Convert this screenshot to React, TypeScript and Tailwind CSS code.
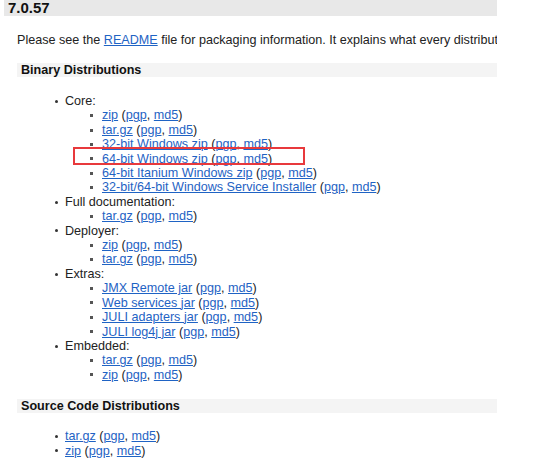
const link = "text-[#1f63c4] underline decoration-1 underline-offset-[1px]";

type Sub = { name: string };

const groups: { title: string; items: string[] }[] = [
  {
    title: "Core:",
    items: [
      "zip",
      "tar.gz",
      "32-bit Windows zip",
      "64-bit Windows zip",
      "64-bit Itanium Windows zip",
      "32-bit/64-bit Windows Service Installer",
    ],
  },
  { title: "Full documentation:", items: ["tar.gz"] },
  { title: "Deployer:", items: ["zip", "tar.gz"] },
  {
    title: "Extras:",
    items: ["JMX Remote jar", "Web services jar", "JULI adapters jar", "JULI log4j jar"],
  },
  { title: "Embedded:", items: ["tar.gz", "zip"] },
];

const Download = ({ name }: Sub) => (
  <span>
    <a className={link}>{name}</a> (<a className={link}>pgp</a>,{" "}
    <a className={link}>md5</a>)
  </span>
);

const Dot = () => (
  <span className="w-[10px] flex items-center">
    <span className="w-[3px] h-[3px] rounded-full bg-[#333]" />
  </span>
);

const Square = () => (
  <span className="w-[12px] flex items-center">
    <span className="w-[3px] h-[3px] bg-[#555]" />
  </span>
);

const App = () => {
  return (
    <div
      className="w-[546px] h-[470px] bg-white overflow-hidden text-[#222] text-[12.6px] leading-[14.4px]"
      style={{ fontFamily: '"Liberation Sans", Arial, sans-serif' }}
    >
      <div className="ml-[4px] w-[493px] overflow-hidden whitespace-nowrap">
        <h2 className="bg-[#e8e8e8] h-[16px] pl-[4px] text-[15px] leading-[16px] font-bold text-[#111]">
          7.0.57
        </h2>
        <p className="mt-[17px] ml-[13px] leading-[15px]">
          Please see the <a className={link}>README</a> file for packaging
          information. It explains what every distribution contains.
        </p>
        <h3 className="mt-[15px] ml-[13px] bg-[#f4f4f4] h-[14px] pl-[4px] font-bold leading-[14px] text-[#111]">
          Binary Distributions
        </h3>
        <div className="mt-[17px] ml-[51px]">
          {groups.map((g) => (
            <div key={g.title}>
              <div className="flex">
                <Dot />
                <span>{g.title}</span>
              </div>
              {g.items.map((it, i) => (
                <div key={i} className="flex ml-[35px] relative">
                  <Square />
                  <Download name={it} />
                  {g.title === "Core:" && it === "64-bit Windows zip" && (
                    <span className="absolute left-[-17px] top-[-5px] w-[232px] h-[18px] border-2 border-[#e8393c]" />
                  )}
                </div>
              ))}
            </div>
          ))}
        </div>
        <h3 className="mt-[17px] ml-[13px] bg-[#f4f4f4] h-[14px] pl-[4px] font-bold leading-[14px] text-[#111]">
          Source Code Distributions
        </h3>
        <div className="mt-[16px] ml-[51px]">
          {["tar.gz", "zip"].map((it) => (
            <div key={it} className="flex">
              <Dot />
              <Download name={it} />
            </div>
          ))}
        </div>
      </div>
    </div>
  );
};

export default App;
